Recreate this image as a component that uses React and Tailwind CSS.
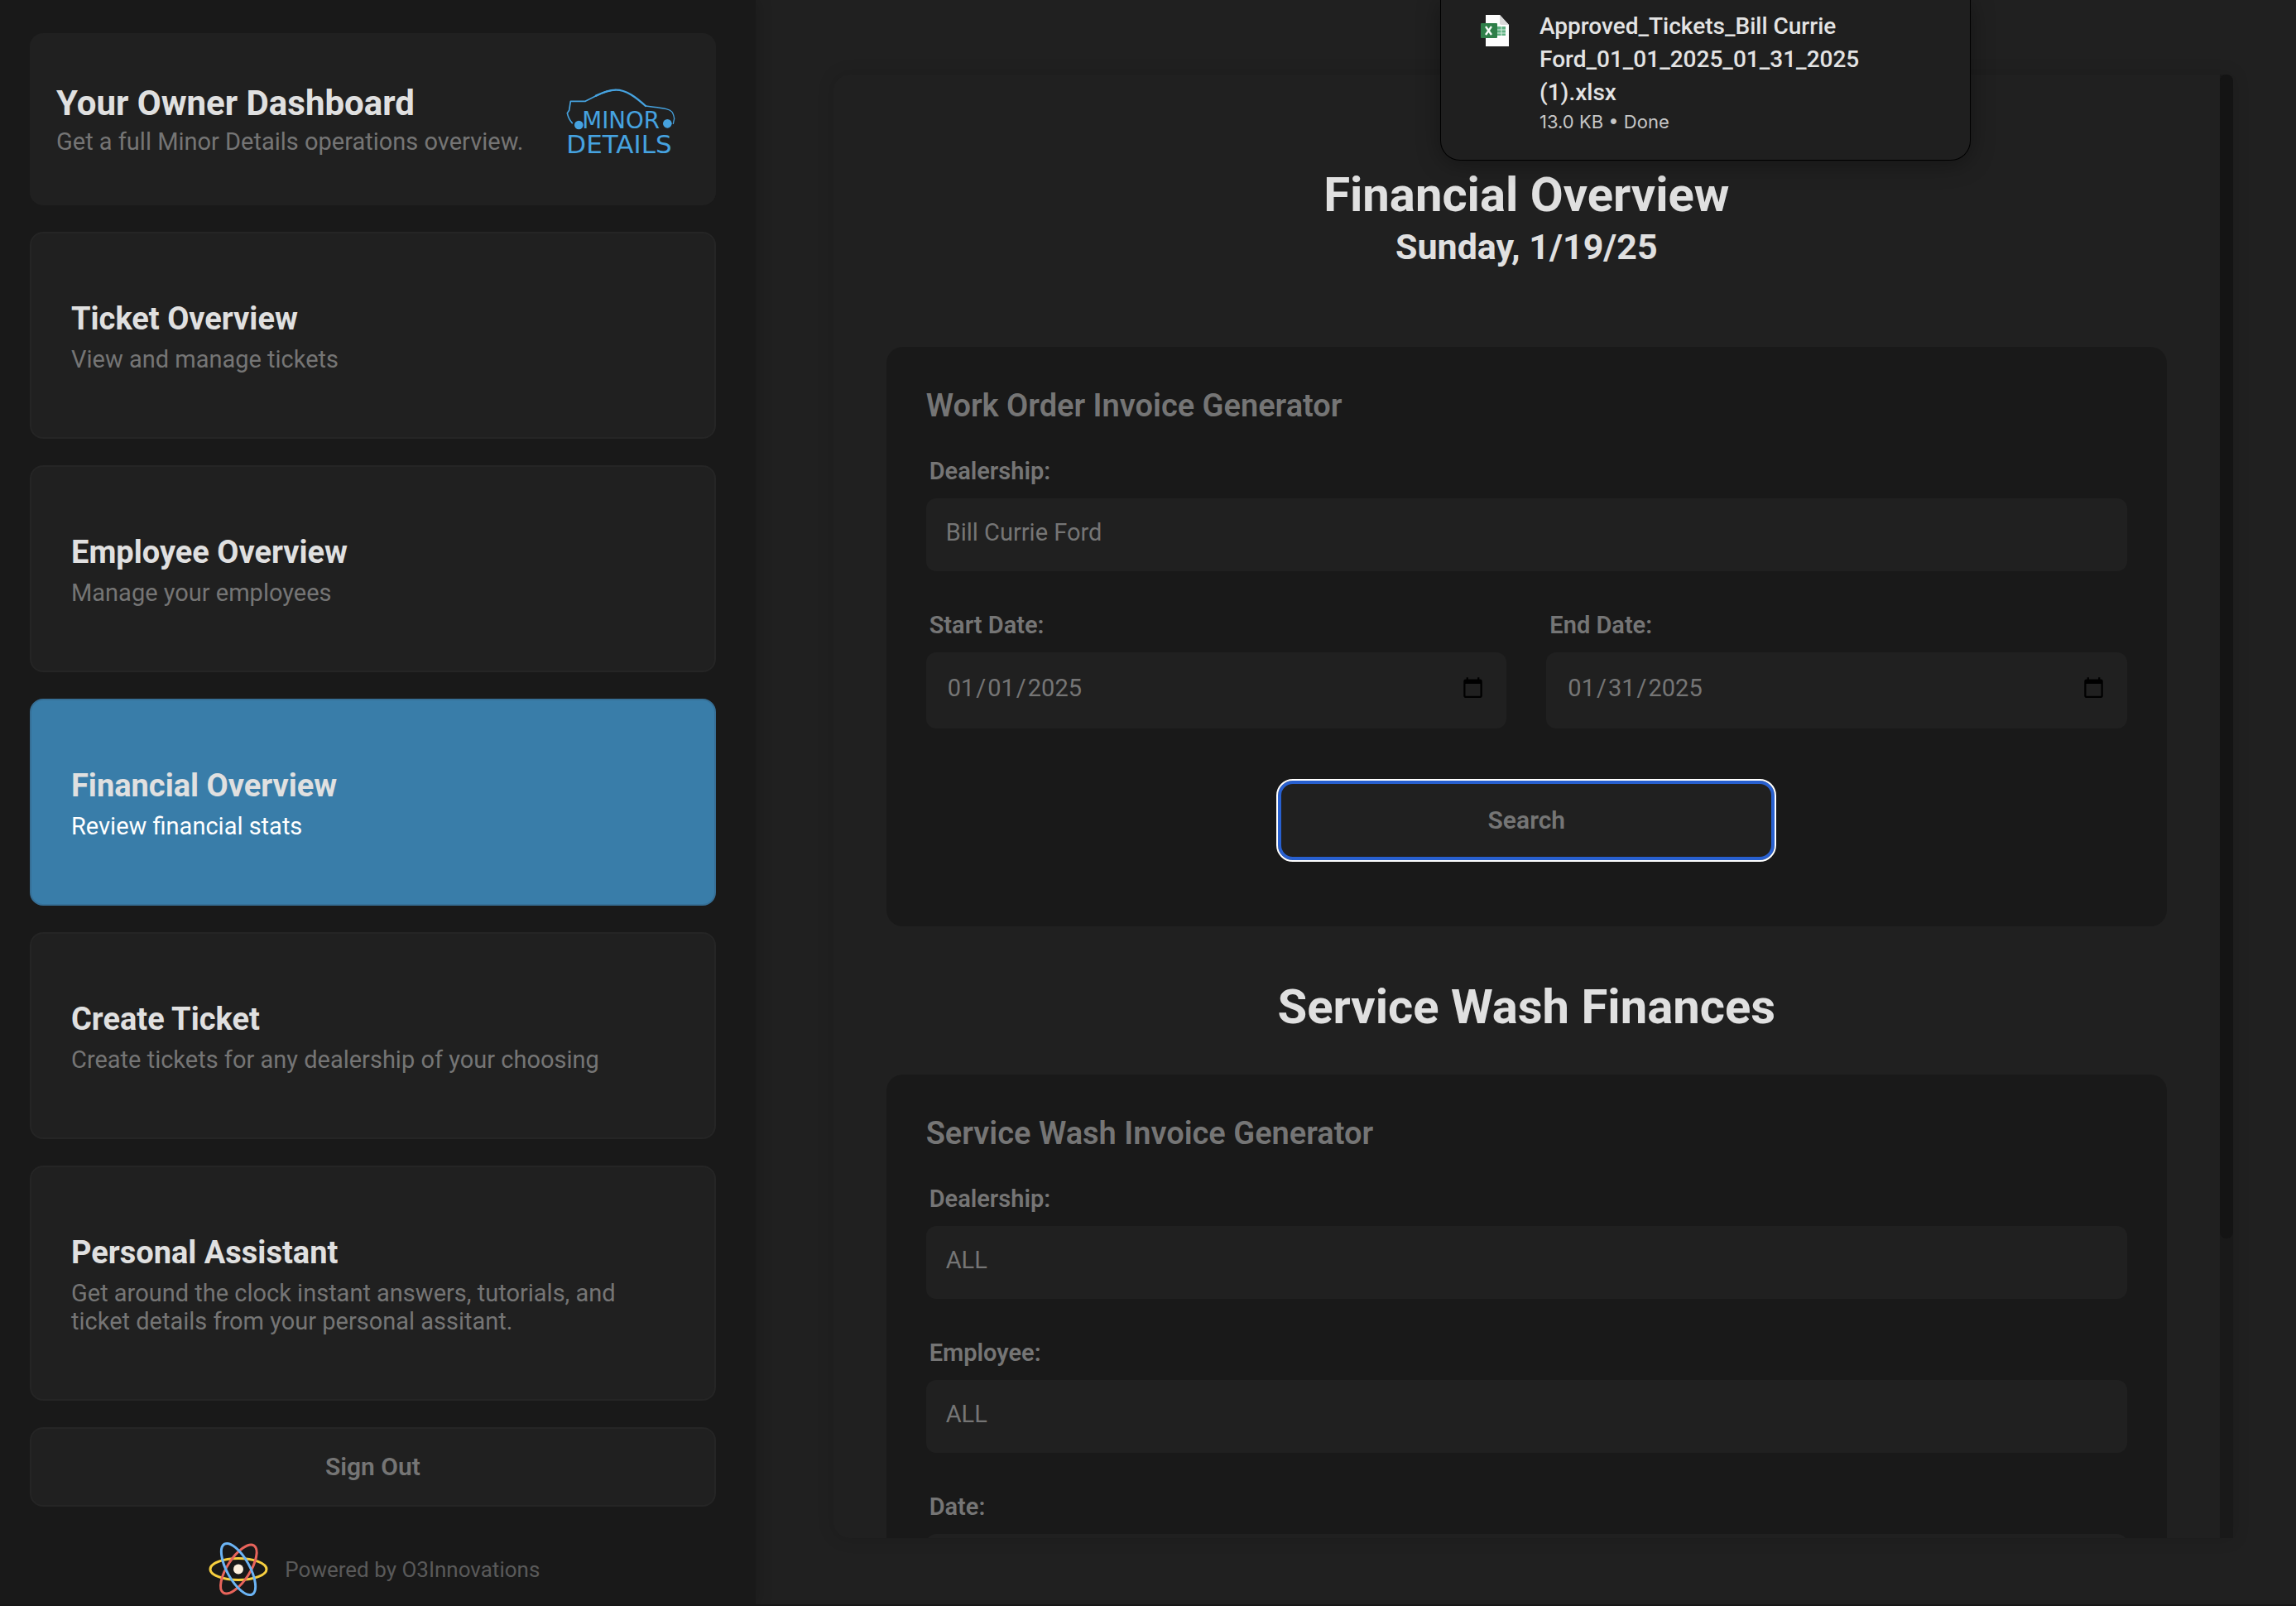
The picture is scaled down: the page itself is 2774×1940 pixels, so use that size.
import React from "react";

const navItems = [
  { title: "Ticket Overview", text: "View and manage tickets" },
  { title: "Employee Overview", text: "Manage your employees" },
  { title: "Financial Overview", text: "Review financial stats", active: true },
  { title: "Create Ticket", text: "Create tickets for any dealership of your choosing" },
  {
    title: "Personal Assistant",
    text: "Get around the clock instant answers, tutorials, and ticket details from your personal assitant.",
  },
];

function MinorDetailsLogo() {
  return (
    <svg
      viewBox="72 46 399 243"
      className="mt-1 mr-4 h-[81px] w-[133px] shrink-0 overflow-visible"
      role="img"
      aria-label="Minor Details"
      fill="none"
      stroke="#46a3e0"
      strokeLinecap="round"
      strokeLinejoin="round"
    >
      <path
        strokeWidth="5"
        d="M94 174 C84 163 79 152 76 138 L83 128 L88 95 L142 95 C178 76 214 56 250 54"
      />
      <path
        strokeWidth="7"
        d="M180 75 C210 61 232 54 250 54 C290 53 325 80 360 112"
      />
      <path strokeWidth="4" d="M360 112 C385 116 410 117 435 123 C453 127 460 133 464 158 L460 176" />
      <circle cx="118" cy="181" r="16" fill="#46a3e0" stroke="none" />
      <circle cx="439" cy="176" r="16" fill="#46a3e0" stroke="none" />
      <g fill="#46a3e0" stroke="none" fontFamily="'DejaVu Sans', sans-serif" fontWeight="400">
        <text x="130" y="193" fontSize="83">MINOR</text>
        <text x="73" y="284" fontSize="93">DETAILS</text>
      </g>
    </svg>
  );
}

function AtomLogo() {
  return (
    <svg viewBox="42 40 216 200" className="h-[67px] w-[72px] shrink-0" fill="none" strokeWidth="9" aria-hidden="true">
      <ellipse cx="150" cy="140" rx="102" ry="39" stroke="#f6cf3f" />
      <ellipse cx="151" cy="140" rx="102" ry="41" stroke="#e8645b" transform="rotate(-57 151 140)" />
      <ellipse cx="150" cy="140" rx="104" ry="41" stroke="#6bb4f5" transform="rotate(61 150 140)" />
      <circle cx="150" cy="140" r="18" fill="#fcf0df" />
    </svg>
  );
}

function ExcelIcon() {
  return (
    <svg viewBox="0 0 34 38" className="mt-1.5 h-[38px] w-[34px] shrink-0" aria-hidden="true">
      <path d="M6 0H23L34 12V38H6Z" fill="#fdfdfd" />
      <path d="M23 0L34 12H25Q23 12 23 10Z" fill="#d9d9d9" />
      <rect x="20" y="14" width="10" height="11" fill="#5fb183" />
      <path d="M25 14V25M20 18H30M20 22H30" stroke="#d7efe0" strokeWidth="1" />
      <rect x="0" y="10" width="20" height="18" rx="1" fill="#2f7f49" />
      <path d="M6 14L13 24M13 14L6 24" stroke="#f4faf6" strokeWidth="2.4" />
    </svg>
  );
}

function NavCard({ title, text, active }) {
  return (
    <button
      type="button"
      aria-current={active ? "page" : undefined}
      className={
        active
          ? "rounded-2xl border-2 border-[#366f96] bg-[#397da9] px-12 pt-[79px] pb-[77px] text-left"
          : "rounded-2xl border-2 border-[#252525] bg-[#202020] px-12 pt-[79px] pb-[77px] text-left"
      }
    >
      <span className="block text-[38px] leading-[48px] font-bold text-[#e0e0e0]">{title}</span>
      <span
        className={
          active
            ? "mt-2 block text-[29px] leading-[34px] text-white"
            : "mt-2 block text-[29px] leading-[34px] text-[#757575]"
        }
      >
        {text}
      </span>
    </button>
  );
}

function Sidebar() {
  return (
    <aside className="z-10 flex w-[32.9%] shrink-0 flex-col gap-8 bg-[#191919] pt-10 pr-12 pl-9 shadow-[4px_0_16px_rgba(0,0,0,0.15)]">
      <header className="flex h-[208px] shrink-0 items-center justify-between rounded-2xl bg-[#202020] px-8">
        <div>
          <h1 className="text-[42px] leading-[50px] font-bold text-[#e0e0e0]">Your Owner Dashboard</h1>
          <p className="mt-1 text-[29px] leading-[34px] text-[#757575]">Get a full Minor Details operations overview.</p>
        </div>
        <MinorDetailsLogo />
      </header>
      <nav className="flex flex-col gap-8">
        {navItems.map((item) => (
          <NavCard key={item.title} {...item} />
        ))}
      </nav>
      <button
        type="button"
        className="h-24 shrink-0 rounded-2xl border-2 border-[#252525] bg-[#202020] text-[30px] leading-[36px] font-semibold text-[#757575]"
      >
        Sign Out
      </button>
      <footer className="mt-2.5 flex items-center justify-center gap-5 pl-1 text-[26px] leading-[32px] text-[#5a5a5a]">
        <AtomLogo />
        Powered by O3Innovations
      </footer>
    </aside>
  );
}

function Field({ label, id, children }) {
  return (
    <div className="flex flex-1 flex-col gap-4">
      <label htmlFor={id} className="pl-1 text-[29px] leading-[34px] font-semibold text-[#757575]">
        {label}
      </label>
      {children}
    </div>
  );
}

function SelectField({ label, id, value }) {
  return (
    <Field label={label} id={id}>
      <select
        id={id}
        defaultValue={value}
        className="h-[88px] w-full appearance-none rounded-xl bg-[#202020] px-6 pb-1.5 text-[29px] leading-[34px] text-[#757575]"
      >
        <option>{value}</option>
      </select>
    </Field>
  );
}

function DateField({ label, id, value }) {
  return (
    <Field label={label} id={id}>
      <input
        id={id}
        type="date"
        defaultValue={value}
        className="h-[92px] w-full rounded-xl bg-[#202020] px-6 pb-1.5 text-[29px] leading-[34px] text-[#757575] [&::-webkit-datetime-edit-day-field]:px-0.5 [&::-webkit-datetime-edit-month-field]:px-0.5 [&::-webkit-datetime-edit-year-field]:px-0.5"
      />
    </Field>
  );
}

function GeneratorCard({ title, children }) {
  return (
    <section className="rounded-[20px] bg-[#191919] px-12 pt-12 pb-[78px]">
      <h3 className="mb-[39px] text-[38px] leading-[46px] font-semibold text-[#757575]">{title}</h3>
      <div className="flex flex-col gap-12">{children}</div>
    </section>
  );
}

function DownloadToast() {
  return (
    <div className="absolute top-0 right-[393px] z-20 flex w-[641px] gap-[37px] rounded-b-3xl border border-t-0 border-black bg-[#1f1f1f] px-12 pt-3 pb-[31px] shadow-[0_4px_28px_rgba(0,0,0,0.35)]">
      <ExcelIcon />
      <div>
        <p className="text-[28px] leading-[40px] font-medium text-[#e3e3e3]">
          Approved_Tickets_Bill Currie
          <br />
          Ford_01_01_2025_01_31_2025
          <br />
          (1).xlsx
        </p>
        <p className="font-['Inter'] text-[22px] leading-[30px] text-[#c7c7c7]">13.0 KB • Done</p>
      </div>
    </div>
  );
}

export default function App() {
  return (
    <div className="relative flex h-screen overflow-hidden border-b-2 border-[#161616] bg-[#202020] font-['Roboto',sans-serif]">
      <Sidebar />
      <main className="flex min-w-0 flex-1 flex-col pt-[90px] pr-[76px] pb-20 pl-[94px]">
        <div className="flex min-h-0 flex-1 overflow-hidden rounded-l-[20px] rounded-tr-lg bg-[#202020] shadow-[0_0_20px_rgba(0,0,0,0.15)]">
          <div className="h-full min-w-0 flex-1 overflow-hidden px-16 pt-[111px]">
            <div className="mb-24 flex flex-col gap-1 text-center font-bold text-[#e0e0e0]">
              <h2 className="text-[58px] leading-[68px]">Financial Overview</h2>
              <p className="text-[43px] leading-[50px]">Sunday, 1/19/25</p>
            </div>
            <GeneratorCard title="Work Order Invoice Generator">
              <SelectField label="Dealership:" id="order-dealership" value="Bill Currie Ford" />
              <div className="flex gap-12">
                <DateField label="Start Date:" id="start-date" value="2025-01-01" />
                <DateField label="End Date:" id="end-date" value="2025-01-31" />
              </div>
              <button
                type="button"
                className="mt-[13px] h-[100px] w-[604px] self-center rounded-[20px] border-2 border-white bg-[#202020] text-[30px] leading-[36px] font-semibold text-[#757575] shadow-[inset_0_0_0_4px_#2860d0]"
              >
                Search
              </button>
            </GeneratorCard>
            <h2 className="mt-[63px] mb-12 text-center text-[58px] leading-[68px] font-bold text-[#e0e0e0]">
              Service Wash Finances
            </h2>
            <GeneratorCard title="Service Wash Invoice Generator">
              <SelectField label="Dealership:" id="wash-dealership" value="ALL" />
              <SelectField label="Employee:" id="wash-employee" value="ALL" />
              <DateField label="Date:" id="wash-date" value="2025-01-19" />
            </GeneratorCard>
          </div>
          <div className="w-4 shrink-0 bg-[#191919]">
            <div className="h-[79.5%] rounded-lg bg-[#141414]" />
          </div>
        </div>
      </main>
      <DownloadToast />
    </div>
  );
}
